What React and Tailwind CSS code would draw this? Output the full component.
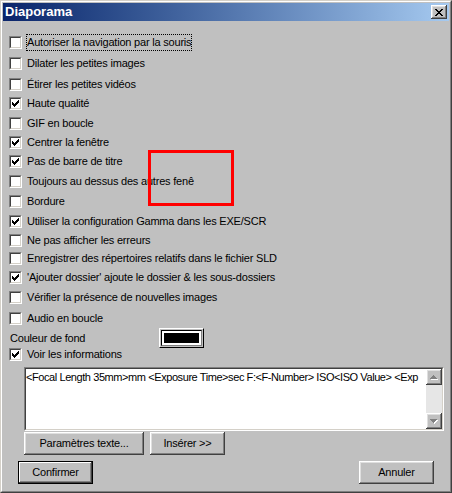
import React from "react";

const FONT = { fontFamily: '"Liberation Sans", Arial, sans-serif' };

function CheckMark() {
  return (
    <svg className="absolute left-[1px] top-[1px]" width="7" height="7" viewBox="0 0 7 7" shapeRendering="crispEdges">
      <path
        fill="#000"
        d="M6 0h1v1h-1z M5 1h2v1h-2z M0 2h1v1h-1z M4 2h3v1h-3z M0 3h2v1h-2z M3 3h3v1h-3z M0 4h5v1h-5z M1 5h3v1h-3z M2 6h1v1h-1z"
      />
    </svg>
  );
}

function Check({ checked }) {
  return (
    <div className="w-[13px] h-[13px] shrink-0 border border-t-[#808080] border-l-[#808080] border-b-white border-r-white">
      <div className="relative w-full h-full bg-white border border-t-[#404040] border-l-[#404040] border-b-[#d4d0c8] border-r-[#d4d0c8]">
        {checked && <CheckMark />}
      </div>
    </div>
  );
}

const rows = [
  { t: "Autoriser la navigation par la souris", c: false, h: "h-[21px]", focus: true },
  { t: "Dilater les petites images", c: false, h: "h-[21px]" },
  { t: "Étirer les petites vidéos", c: false, h: "h-[20px]" },
  { t: "Haute qualité", c: true, h: "h-[19px]" },
  { t: "GIF en boucle", c: false, h: "h-[20px]" },
  { t: "Centrer la fenêtre", c: true, h: "h-[19px]" },
  { t: "Pas de barre de titre", c: true, h: "h-[19px]" },
  { t: "Toujours au dessus des autres fenê", c: false, h: "h-[20px]" },
  { t: "Bordure", c: false, h: "h-[20px]" },
  { t: "Utiliser la configuration Gamma dans les EXE/SCR", c: true, h: "h-[20px]" },
  { t: "Ne pas afficher les erreurs", c: false, h: "h-[18px]" },
  { t: "Enregistrer des répertoires relatifs dans le fichier SLD", c: false, h: "h-[19px]" },
  { t: "'Ajouter dossier' ajoute le dossier & les sous-dossiers", c: true, h: "h-[19px]" },
  { t: "Vérifier la présence de nouvelles images", c: false, h: "h-[21px]" },
  { t: "Audio en boucle", c: false, h: "h-[21px]" },
];

function Row({ t, c, h, focus }) {
  return (
    <div className={`flex items-center ${h}`}>
      <Check checked={c} />
      <span
        className={`ml-[4px] py-[1px] leading-[13px] whitespace-nowrap border border-dotted ${
          focus ? "border-black" : "border-transparent"
        }`}
      >
        {t}
      </span>
    </div>
  );
}

const raised =
  "shadow-[inset_-1px_-1px_0_#404040,inset_1px_1px_0_#ffffff,inset_-2px_-2px_0_#808080,inset_2px_2px_0_#dfdfdf]";

function Button({ children, w, def }) {
  if (def) {
    return (
      <div className={`${w} h-[23px] border border-black flex items-center justify-center shadow-[inset_-1px_-1px_0_#404040,inset_1px_1px_0_#ffffff,inset_-2px_-2px_0_#808080]`}>
        {children}
      </div>
    );
  }
  return <div className={`${w} h-[23px] flex items-center justify-center ${raised}`}>{children}</div>;
}

function ArrowUp() {
  return (
    <svg width="8" height="5" viewBox="0 0 8 5" shapeRendering="crispEdges">
      <path fill="#fff" d="M4 1h1v1h-1z M3 2h3v1h-3z M2 3h5v1h-5z M1 4h7v1h-7z" />
      <path fill="#808080" d="M3 0h1v1h-1z M2 1h3v1h-3z M1 2h5v1h-5z M0 3h7v1h-7z" />
    </svg>
  );
}

function ArrowDown() {
  return (
    <svg width="8" height="5" viewBox="0 0 8 5" shapeRendering="crispEdges">
      <path fill="#fff" d="M1 1h7v1h-7z M2 2h5v1h-5z M3 3h3v1h-3z M4 4h1v1h-1z" />
      <path fill="#808080" d="M0 0h7v1h-7z M1 1h5v1h-5z M2 2h3v1h-3z M3 3h1v1h-1z" />
    </svg>
  );
}

export default function App() {
  return (
    <div
      className="relative w-[452px] h-[493px] bg-[#c0c0c0] text-black text-[11px] tracking-[-0.2px] border border-t-[#d4d0c8] border-l-[#d4d0c8] border-r-[#404040] border-b-[#404040]"
      style={FONT}
    >
      <div className="w-full h-full border border-t-white border-l-white border-r-[#808080] border-b-[#808080] p-[1px] flex flex-col">
        {/* Title bar */}
        <div className="h-[18px] shrink-0 flex items-center justify-between bg-linear-to-r from-[#0a246a] to-[#a6caf0] pl-[2px] pr-[2px]">
          <span className="text-white font-bold text-[13px] tracking-normal leading-[16px]">Diaporama</span>
          <div className={`w-[16px] h-[14px] bg-[#c0c0c0] flex items-center justify-center ${raised}`}>
            <svg width="8" height="7" viewBox="0 0 8 7" shapeRendering="crispEdges">
              <path
                fill="#000"
                d="M0 0h2v1h-2z M6 0h2v1h-2z M1 1h2v1h-2z M5 1h2v1h-2z M2 2h4v1h-4z M3 3h2v1h-2z M2 4h4v1h-4z M1 5h2v1h-2z M5 5h2v1h-2z M0 6h2v1h-2z M6 6h2v1h-2z"
              />
            </svg>
          </div>
        </div>

        {/* Content */}
        <div className="flex flex-col pl-[6px] pt-[11px]">
          {rows.map((r, i) => (
            <Row key={i} {...r} />
          ))}
          <div className="flex items-center h-[18px]">
            <span className="w-[150px] leading-[13px] pl-[1px]">Couleur de fond</span>
            <div className="w-[45px] h-[20px] border border-t-white border-l-white border-r-black border-b-black p-[1px] bg-[#c0c0c0]">
              <div className="w-full h-full bg-white p-[2px] border border-t-black border-l-black border-r-[#808080] border-b-[#808080]">
                <div className="w-full h-full bg-black" />
              </div>
            </div>
          </div>
          <div className="flex items-center h-[15px]">
            <Check checked={true} />
            <span className="ml-[4px] py-[1px] leading-[13px] whitespace-nowrap border border-transparent">
              Voir les informations
            </span>
          </div>

          {/* Text area */}
          <div className="ml-[15px] mt-[5px] w-[420px] h-[64px] border border-t-[#808080] border-l-[#808080] border-b-white border-r-white">
            <div className="w-full h-full flex bg-white border border-t-[#404040] border-l-[#404040] border-b-[#d4d0c8] border-r-[#d4d0c8]">
              <div className="flex-1 min-w-0 whitespace-nowrap pt-[2px] pl-[0px] leading-[13px] tracking-[-0.42px] overflow-hidden">
                &lt;Focal Length 35mm&gt;mm &lt;Exposure Time&gt;sec F:&lt;F-Number&gt; ISO&lt;ISO Value&gt; &lt;Exp
              </div>
              <div className="w-[16px] shrink-0 flex flex-col bg-[#e6e6e6]">
                <div className={`h-[16px] bg-[#c0c0c0] flex items-center justify-center ${raised}`}>
                  <ArrowUp />
                </div>
                <div className="flex-1" />
                <div className={`h-[16px] bg-[#c0c0c0] flex items-center justify-center ${raised}`}>
                  <ArrowDown />
                </div>
              </div>
            </div>
          </div>

          {/* Buttons under text area */}
          <div className="flex ml-[15px] mt-[1px] gap-[6px]">
            <Button w="w-[120px]">Paramètres texte...</Button>
            <Button w="w-[75px]">Insérer &gt;&gt;</Button>
          </div>
        </div>

        {/* Bottom buttons */}
        <div className="flex justify-between px-[15px] mt-[6px]">
          <Button w="w-[75px]" def>
            Confirmer
          </Button>
          <Button w="w-[75px]">Annuler</Button>
        </div>
      </div>

      {/* Red annotation rectangle */}
      <div className="absolute left-[147px] top-[149px] w-[86px] h-[56px] border-[3px] border-[#ff0000]" />
    </div>
  );
}
